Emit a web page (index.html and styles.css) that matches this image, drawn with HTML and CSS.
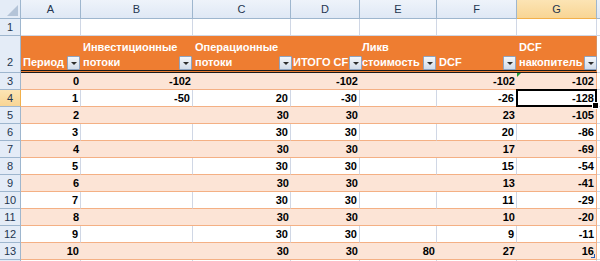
FILE: index.html
```html
<!DOCTYPE html>
<html>
<head>
<meta charset="utf-8">
<link rel="stylesheet" href="styles.css">
</head>
<body>
<div class="sheet">
  <div class="row colhead">
    <div class="corner"><span class="tri"></span></div>
    <div class="ch">A</div><div class="ch">B</div><div class="ch">C</div><div class="ch">D</div><div class="ch">E</div><div class="ch">F</div><div class="ch sel">G</div><div class="ch"></div>
  </div>
  <div class="row r1">
    <div class="rh">1</div>
    <div class="c"></div><div class="c"></div><div class="c"></div><div class="c"></div><div class="c"></div><div class="c"></div><div class="c"></div><div class="c"></div>
  </div>
  <div class="row r2">
    <div class="rh">2</div>
    <div class="hc"><span class="ht">Период</span><span class="fb"></span></div>
    <div class="hc"><span class="ht">Инвестиционные<br>потоки</span><span class="fb"></span></div>
    <div class="hc"><span class="ht">Операционные<br>потоки</span><span class="fb"></span></div>
    <div class="hc"><span class="ht">ИТОГО CF</span><span class="fb"></span></div>
    <div class="hc"><span class="ht">Ликв<br>стоимость</span><span class="fb"></span></div>
    <div class="hc"><span class="ht">DCF</span><span class="fb"></span></div>
    <div class="hc last"><span class="ht">DCF<br>накопитель</span><span class="fb"></span></div>
    <div class="c"></div>
  </div>
  <div class="row band">
    <div class="rh">3</div>
    <div class="d">0</div><div class="d">-102</div><div class="d"></div><div class="d">-102</div><div class="d"></div><div class="d">-102</div><div class="d last err">-102</div><div class="c"></div>
  </div>
  <div class="row plain">
    <div class="rh sel">4</div>
    <div class="d">1</div><div class="d">-50</div><div class="d">20</div><div class="d">-30</div><div class="d"></div><div class="d">-26</div><div class="d last active">-128</div><div class="c"></div>
  </div>
  <div class="row band">
    <div class="rh">5</div>
    <div class="d">2</div><div class="d"></div><div class="d">30</div><div class="d">30</div><div class="d"></div><div class="d">23</div><div class="d last">-105</div><div class="c"></div>
  </div>
  <div class="row plain">
    <div class="rh">6</div>
    <div class="d">3</div><div class="d"></div><div class="d">30</div><div class="d">30</div><div class="d"></div><div class="d">20</div><div class="d last">-86</div><div class="c"></div>
  </div>
  <div class="row band">
    <div class="rh">7</div>
    <div class="d">4</div><div class="d"></div><div class="d">30</div><div class="d">30</div><div class="d"></div><div class="d">17</div><div class="d last">-69</div><div class="c"></div>
  </div>
  <div class="row plain">
    <div class="rh">8</div>
    <div class="d">5</div><div class="d"></div><div class="d">30</div><div class="d">30</div><div class="d"></div><div class="d">15</div><div class="d last">-54</div><div class="c"></div>
  </div>
  <div class="row band">
    <div class="rh">9</div>
    <div class="d">6</div><div class="d"></div><div class="d">30</div><div class="d">30</div><div class="d"></div><div class="d">13</div><div class="d last">-41</div><div class="c"></div>
  </div>
  <div class="row plain">
    <div class="rh">10</div>
    <div class="d">7</div><div class="d"></div><div class="d">30</div><div class="d">30</div><div class="d"></div><div class="d">11</div><div class="d last">-29</div><div class="c"></div>
  </div>
  <div class="row band">
    <div class="rh">11</div>
    <div class="d">8</div><div class="d"></div><div class="d">30</div><div class="d">30</div><div class="d"></div><div class="d">10</div><div class="d last">-20</div><div class="c"></div>
  </div>
  <div class="row plain">
    <div class="rh">12</div>
    <div class="d">9</div><div class="d"></div><div class="d">30</div><div class="d">30</div><div class="d"></div><div class="d">9</div><div class="d last">-11</div><div class="c"></div>
  </div>
  <div class="row band">
    <div class="rh">13</div>
    <div class="d">10</div><div class="d"></div><div class="d">30</div><div class="d">30</div><div class="d">80</div><div class="d">27</div><div class="d last resize">16</div><div class="c"></div>
  </div>
  <div class="row r14">
    <div class="rh"></div>
    <div class="c"></div><div class="c"></div><div class="c"></div><div class="c"></div><div class="c"></div><div class="c"></div><div class="c"></div><div class="c"></div>
  </div>
</div>
</body>
</html>
```

FILE: styles.css
```css
* { box-sizing: border-box; }
html, body { margin: 0; padding: 0; background: #fff; overflow: hidden; }
body { width: 600px; height: 261px; font-family: "Liberation Sans", Arial, sans-serif; }

.sheet { display: flex; flex-direction: column; width: 600px; height: 261px; overflow: hidden; }

.row {
  display: grid;
  grid-template-columns: 21px 60px 112px 98px 69px 77px 80px 80px 23px;
  height: 17px;
  flex: none;
}

.colhead { height: 19px; }
.r2 { height: 37px; }
.r14 { height: 1px; }

.corner {
  background: #e4ecf7;
  border-right: 1px solid #9eb6ce;
  border-bottom: 1px solid #9eb6ce;
  position: relative;
}
.tri {
  position: absolute;
  right: 2px;
  bottom: 2px;
  width: 0; height: 0;
  border-left: 11px solid transparent;
  border-bottom: 11px solid #b4c4d8;
}

.ch {
  background: linear-gradient(#eef3fa, #dfe8f5);
  border-right: 1px solid #9eb6ce;
  border-bottom: 1px solid #9eb6ce;
  color: #23354f;
  font-size: 11px;
  text-align: center;
  line-height: 18px;
}
.ch.sel {
  background: linear-gradient(#fce4b4, #f8d594);
  border-bottom-color: #f2b04a;
}

.rh {
  background: #e4ecf7;
  border-right: 1px solid #9eb6ce;
  border-bottom: 1px solid #9eb6ce;
  color: #23354f;
  font-size: 11px;
  text-align: center;
  line-height: 16px;
}
.r2 .rh { display: flex; align-items: flex-end; justify-content: center; padding-bottom: 2px; }
.rh.sel { background: linear-gradient(#fce4b4, #f8d594); border-right-color: #f2b04a; }

.c {
  border-right: 1px solid #d0d7e5;
  border-bottom: 1px solid #d0d7e5;
}

.hc {
  background: #ee7d31;
  border-bottom: 3px double #1a1a1a;
  display: flex;
  align-items: flex-end;
  justify-content: space-between;
  padding-left: 2px;
  color: #fff;
  font-weight: bold;
  font-size: 11px;
  line-height: 15px;
}
.hc.last { border-right: 1px solid #d89060; }
.ht { white-space: nowrap; }
.fb {
  flex: none;
  width: 13px;
  height: 14px;
  margin: 0 1px;
  border: 1px solid #8ea4c2;
  border-radius: 1px;
  background: linear-gradient(#f4f7fb, #d2dbe8);
  position: relative;
}
.fb::after {
  content: "";
  position: absolute;
  left: 3px;
  top: 5px;
  width: 0; height: 0;
  border-left: 3px solid transparent;
  border-right: 3px solid transparent;
  border-top: 3px solid #2d2d2d;
}

.d {
  font-size: 11px;
  font-weight: bold;
  color: #000;
  text-align: right;
  padding-right: 2px;
  line-height: 16px;
  border-bottom: 1px solid #f4b084;
}
.band .d { background: #fce4d6; }
.plain .d { background: #fff; border-right: 1px solid #d0d7e5; }
.d.last, .plain .d.last { border-right: 1px solid #f4b084; }

.err { position: relative; }
.err::before {
  content: "";
  position: absolute;
  left: 0; top: 0;
  width: 0; height: 0;
  border-top: 4px solid #1f9a3a;
  border-right: 4px solid transparent;
}

.active { position: relative; }
.active::after {
  content: "";
  position: absolute;
  left: -1px; top: -1px; right: -1px; bottom: -1px;
  border: 2px solid #000;
}
.active::before {
  content: "";
  position: absolute;
  right: -3px; bottom: -3px;
  width: 5px; height: 5px;
  background: #000;
  border: 1px solid #fff;
  z-index: 2;
}

.resize { position: relative; }
.resize::after {
  content: "";
  position: absolute;
  right: 1px; bottom: 1px;
  width: 3px; height: 3px;
  border-right: 1px solid #2a5fb5;
  border-bottom: 1px solid #2a5fb5;
}

.r14 .rh, .r14 .c { border-bottom: none; }
```
